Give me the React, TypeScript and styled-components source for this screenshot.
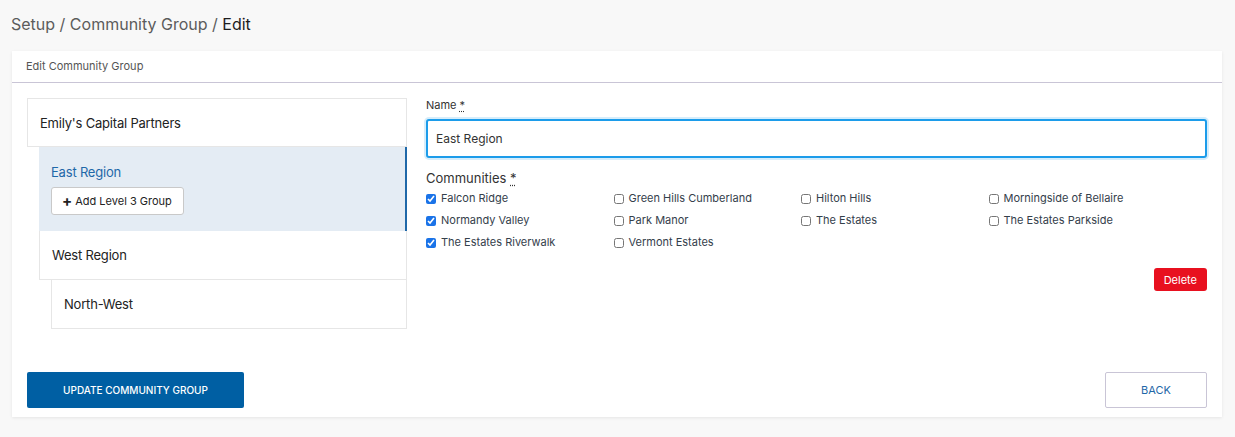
import React from "react";
import styled, { createGlobalStyle } from "styled-components";

const Global = createGlobalStyle`
  html, body { margin: 0; padding: 0; background: #f8f8f8; }
  body { font-family: "Inter", "Open Sans", sans-serif; color: #222; }
  * { box-sizing: border-box; }
`;

const Page = styled.div`
  padding: 12px 13px 20px 12px;
  width: 1235px;
`;

const Breadcrumb = styled.div`
  font-size: 16px;
  line-height: 22px;
  color: #5c5c5c;
  margin: 1px 0 16px -1px;
`;

const Current = styled.span`
  color: #1d1d1f;
`;

const Card = styled.div`
  background: #fff;
  box-shadow: 0 1px 3px rgba(0, 0, 0, 0.08);
`;

const CardHeader = styled.div`
  height: 32px;
  padding: 0 14px 2px;
  display: flex;
  align-items: center;
  font-size: 11px;
  color: #555;
  border-bottom: 1px solid #c9c5d6;
`;

const CardBody = styled.div`
  padding: 15px 15px 9px 15px;
`;

const Grid = styled.div`
  display: grid;
  grid-template-columns: 380px 1fr;
  column-gap: 19px;
`;

const Tree = styled.div`
  display: flex;
  flex-direction: column;
`;

const TreeItem = styled.div<{ $level: number; $active?: boolean }>`
  margin-left: ${(p) => (p.$level - 1) * 12}px;
  min-height: ${(p) => (p.$active ? 84 : 49)}px;
  padding: ${(p) => (p.$active ? "17px 12px 16px" : "0 12px")};
  display: flex;
  flex-direction: column;
  justify-content: ${(p) => (p.$active ? "flex-start" : "center")};
  font-size: 13px;
  letter-spacing: -0.2px;
  color: ${(p) => (p.$active ? "#1f68a8" : "#222")};
  background: ${(p) => (p.$active ? "#e4ecf4" : "#fff")};
  border: 1px solid #e6e6e6;
  border-top: ${(p) => (p.$level === 1 ? "1px solid #e6e6e6" : "none")};
  ${(p) =>
    p.$active &&
    `border-left: none; border-bottom: none; border-top: none; border-right: 2px solid #1f68a8; padding-left: 12px;`}
`;

const AddButton = styled.button`
  margin-top: 7px;
  align-self: flex-start;
  height: 28px;
  padding: 0 11px 0 10px;
  display: inline-flex;
  align-items: center;
  gap: 3px;
  font-family: inherit;
  font-size: 11px;
  color: #222;
  background: #fff;
  border: 1px solid #c9c9c9;
  border-radius: 3px;
`;

const Plus = styled.span`
  font-size: 15px;
  font-weight: 700;
  line-height: 1;
  margin-top: -1px;
`;

const Form = styled.div`
  display: flex;
  flex-direction: column;
`;

const Label = styled.label<{ $size?: number }>`
  font-size: ${(p) => p.$size ?? 11}px;
  line-height: 14px;
  color: #333;
`;

const Req = styled.abbr`
  text-decoration: underline dotted;
  text-underline-offset: 2px;
`;

const Input = styled.input`
  margin-top: 7px;
  height: 39px;
  width: 100%;
  border: 2px solid #1c9cea;
  border-radius: 3px;
  box-shadow: 0 0 0 2px rgba(28, 156, 234, 0.18);
  padding: 0 8px;
  font-family: inherit;
  font-size: 12px;
  color: #333;
  outline: none;
`;

const CommunitiesLabel = styled(Label)`
  margin-top: 13px;
`;

const CheckGrid = styled.div`
  margin-top: 5px;
  display: grid;
  grid-template-columns: repeat(4, 187.5px);
  row-gap: 6px;
`;

const CheckItem = styled.label`
  display: flex;
  align-items: center;
  gap: 5px;
  font-size: 11px;
  line-height: 16px;
  color: #34404b;
`;

const Box = styled.input`
  width: 10px;
  height: 10px;
  margin: 2px 0 0 0;
  accent-color: #1a73e8;
`;

const DeleteRow = styled.div`
  display: flex;
  justify-content: flex-end;
  margin-top: 18px;
`;

const DeleteButton = styled.button`
  height: 23px;
  padding: 0 10px;
  background: #e8101f;
  color: #fff;
  border: none;
  border-radius: 3px;
  font-family: inherit;
  font-size: 11px;
`;

const Footer = styled.div`
  margin-top: 43px;
  display: flex;
  justify-content: space-between;
`;

const PrimaryButton = styled.button`
  width: 217px;
  height: 36px;
  background: #005fa3;
  color: #fff;
  border: none;
  border-radius: 2px;
  font-family: inherit;
  font-size: 10px;
  font-weight: 500;
  text-transform: uppercase;
`;

const BackButton = styled.button`
  width: 102px;
  height: 36px;
  background: #fff;
  color: #1f68a8;
  border: 1px solid #c9c5d6;
  border-radius: 2px;
  font-family: inherit;
  font-size: 11px;
  text-transform: uppercase;
`;

const communities = [
  { name: "Falcon Ridge", checked: true },
  { name: "Green Hills Cumberland", checked: false },
  { name: "Hilton Hills", checked: false },
  { name: "Morningside of Bellaire", checked: false },
  { name: "Normandy Valley", checked: true },
  { name: "Park Manor", checked: false },
  { name: "The Estates", checked: false },
  { name: "The Estates Parkside", checked: false },
  { name: "The Estates Riverwalk", checked: true },
  { name: "Vermont Estates", checked: false },
];

export default function App() {
  return (
    <>
      <Global />
      <Page>
        <Breadcrumb>
          Setup / Community Group / <Current>Edit</Current>
        </Breadcrumb>
        <Card>
          <CardHeader>Edit Community Group</CardHeader>
          <CardBody>
            <Grid>
              <Tree>
                <TreeItem $level={1}>Emily's Capital Partners</TreeItem>
                <TreeItem $level={2} $active>
                  East Region
                  <AddButton>
                    <Plus>+</Plus> Add Level 3 Group
                  </AddButton>
                </TreeItem>
                <TreeItem $level={2}>West Region</TreeItem>
                <TreeItem $level={3}>North-West</TreeItem>
              </Tree>
              <Form>
                <Label>
                  Name <Req title="required">*</Req>
                </Label>
                <Input defaultValue="East Region" />
                <CommunitiesLabel $size={13}>
                  Communities <Req title="required">*</Req>
                </CommunitiesLabel>
                <CheckGrid>
                  {communities.map((c) => (
                    <CheckItem key={c.name}>
                      <Box type="checkbox" defaultChecked={c.checked} />
                      {c.name}
                    </CheckItem>
                  ))}
                </CheckGrid>
                <DeleteRow>
                  <DeleteButton>Delete</DeleteButton>
                </DeleteRow>
              </Form>
            </Grid>
            <Footer>
              <PrimaryButton>Update Community Group</PrimaryButton>
              <BackButton>Back</BackButton>
            </Footer>
          </CardBody>
        </Card>
      </Page>
    </>
  );
}
